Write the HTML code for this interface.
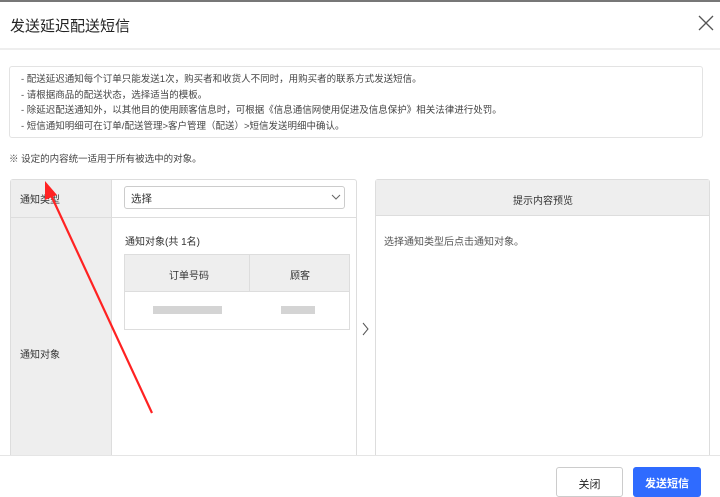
<!DOCTYPE html>
<html><head><meta charset="utf-8"><style>
*{margin:0;padding:0;box-sizing:border-box}
body{width:720px;height:489px;overflow:hidden;background:#fff;font-family:"Liberation Sans","Noto Sans CJK SC",sans-serif;color:#333;position:relative}
.a{position:absolute}
</style></head><body>
<div class="a" style="left:0;top:0;width:720px;height:2px;background:#777"></div>
<div class="a" style="left:10px;top:15px;font-size:15px;color:#222">发送延迟配送短信</div>
<svg class="a" style="left:698px;top:15px" width="16" height="16"><path d="M1 1L15 15M15 1L1 15" stroke="#555" stroke-width="1.3"/></svg>
<div class="a" style="left:0;top:48px;width:720px;height:2px;background:#eee"></div>
<div class="a" style="left:9px;top:66px;width:694px;height:72px;border:1px solid #e3e3e3;border-radius:3px;padding:5px 0 0 11px;font-size:9.5px;line-height:15.5px;color:#444">
- 配送延迟通知每个订单只能发送1次，购买者和收货人不同时，用购买者的联系方式发送短信。<br>
- 请根据商品的配送状态，选择适当的模板。<br>
- 除延迟配送通知外，以其他目的使用顾客信息时，可根据《信息通信网使用促进及信息保护》相关法律进行处罚。<br>
- 短信通知明细可在订单/配送管理&gt;客户管理（配送）&gt;短信发送明细中确认。</div>
<div class="a" style="left:9px;top:151px;font-size:9.5px;color:#444">※ 设定的内容统一适用于所有被选中的对象。</div>
<div class="a" style="left:10px;top:179px;width:347px;height:290px;border:1px solid #ddd;border-radius:3px"></div>
<div class="a" style="left:11px;top:180px;width:101px;height:289px;background:#eee;border-right:1px solid #ddd"></div>
<div class="a" style="left:11px;top:217px;width:345px;height:1px;background:#ddd"></div>
<div class="a" style="left:20px;top:191px;font-size:10px">通知类型</div>
<div class="a" style="left:20px;top:346px;font-size:10px">通知对象</div>
<div class="a" style="left:124px;top:186px;width:221px;height:23px;border:1px solid #ccc;border-radius:3px;padding:4px 6px;font-size:10.5px">选择</div>
<svg class="a" style="left:331px;top:193px" width="10" height="8"><path d="M1 2L5 6L9 2" stroke="#666" fill="none"/></svg>
<div class="a" style="left:125px;top:233px;font-size:10px">通知对象(共 1名)</div>
<div class="a" style="left:124px;top:254px;width:226px;height:76px;border:1px solid #ddd"></div>
<div class="a" style="left:125px;top:255px;width:224px;height:37px;background:#eee;border-bottom:1px solid #ddd"></div>
<div class="a" style="left:249px;top:255px;width:1px;height:37px;background:#ddd"></div>
<div class="a" style="left:169px;top:267px;font-size:10px">订单号码</div>
<div class="a" style="left:290px;top:267px;font-size:10px">顾客</div>
<div class="a" style="left:153px;top:306px;width:69px;height:8px;background:#d4d4d4"></div>
<div class="a" style="left:281px;top:306px;width:34px;height:8px;background:#d4d4d4"></div>
<svg class="a" style="left:362px;top:322px" width="8" height="14"><path d="M1 1L6 7L1 13" stroke="#555" fill="none"/></svg>
<div class="a" style="left:375px;top:179px;width:335px;height:290px;border:1px solid #ddd;border-radius:3px"></div>
<div class="a" style="left:376px;top:180px;width:333px;height:36px;background:#eee;border-bottom:1px solid #ddd"></div>
<div class="a" style="left:513px;top:192px;font-size:10px">提示内容预览</div>
<div class="a" style="left:384px;top:233px;font-size:10px;color:#555">选择通知类型后点击通知对象。</div>
<svg class="a" style="left:0;top:0" width="720" height="489"><path d="M152 413L50 193" stroke="#f22" stroke-width="2.2"/><path d="M45 181L57 195L45 200Z" fill="#f22"/></svg>
<div class="a" style="left:0;top:455px;width:720px;height:34px;background:#fff;border-top:1px solid #e5e5e5"></div>
<div class="a" style="left:556px;top:467px;width:67px;height:30px;border:1px solid #ccc;border-radius:3px;text-align:center;padding-top:8px;font-size:11px;color:#222">关闭</div>
<div class="a" style="left:633px;top:467px;width:68px;height:30px;background:#2f6bff;border-radius:3px;text-align:center;padding-top:8px;font-size:11px;color:#fff;font-weight:bold">发送短信</div>
</body></html>
